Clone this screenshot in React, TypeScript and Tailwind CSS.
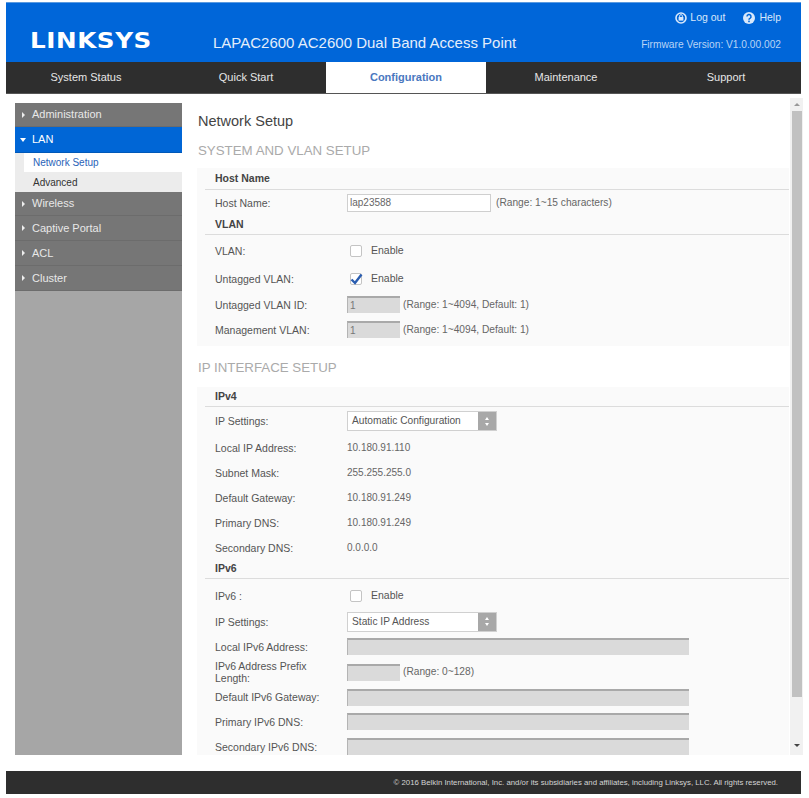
const font = "font-['Liberation_Sans',Arial,sans-serif]";

/* ----------------------------- Sidebar ----------------------------- */
function MenuItem({ label, h, open = false }: { label: string; h: string; open?: boolean }) {
    return (
        <div
            className={`flex items-center border-b ${h} ${
                open ? "bg-[#0066d6] border-[#0058b8] text-white" : "bg-[#767676] border-[#6c6c6c] text-[#e8e8e8]"
            }`}
        >
            <span className="w-[6px] ml-[5px] mr-[5px] flex justify-center">
                {open ? (
                    <span className="border-x-[3px] border-x-transparent border-t-[4px] border-t-white" />
                ) : (
                    <span className="border-y-[3px] border-y-transparent border-l-[3px] border-l-[#eeeeee]" />
                )}
            </span>
            <span className="text-[11px] ml-[1px]">{label}</span>
        </div>
    );
}

function Sidebar() {
    return (
        <aside className="w-[167px] h-[652px] ml-[15px] mt-[9px] bg-[#a6a6a6] shrink-0">
            <MenuItem label="Administration" h="h-[24px]" />
            <MenuItem label="LAN" h="h-[26px]" open />
            <div className="h-[19px] bg-[#ececec] pl-[9px]">
                <div className="h-full bg-white pl-[9px] flex items-center text-[10px] text-[#2a62b8]">Network Setup</div>
            </div>
            <div className="h-[20px] bg-[#ececec] pl-[18px] flex items-center text-[10px] text-[#333333]">Advanced</div>
            <MenuItem label="Wireless" h="h-[24px]" />
            <MenuItem label="Captive Portal" h="h-[25px]" />
            <MenuItem label="ACL" h="h-[25px]" />
            <MenuItem label="Cluster" h="h-[25px]" />
        </aside>
    );
}

/* ----------------------------- Form bits ---------------------------- */
function SubHead({ title, h }: { title: string; h: string }) {
    return (
        <div className={`flex items-center ${h} border-b border-[#dcdcdc] ml-[8px] pl-[10px] text-[10.5px] font-bold text-[#444444]`}>
            {title}
        </div>
    );
}

function Row({ label, h, children }: { label: string; h: string; children?: React.ReactNode }) {
    return (
        <div className={`flex items-center ${h}`}>
            <div className="w-[150px] pl-[18px] pr-[8px] shrink-0 text-[10.5px] leading-[12px] text-[#555555]">{label}</div>
            {children}
        </div>
    );
}

function Hint({ text }: { text: string }) {
    return <span className="ml-[3px] text-[10.2px] text-[#666666]">{text}</span>;
}

function GreyInput({ wide = false, value }: { wide?: boolean; value?: string }) {
    return (
        <div
            className={`${wide ? "w-[342px]" : "w-[53px]"} h-[17px] shrink-0 bg-[#dadada] border-t-2 border-l border-t-[#a9a9a9] border-l-[#b4b4b4] pl-[2px] text-[10px] leading-[15px] text-[#777777]`}
        >
            {value}
        </div>
    );
}

function Check({ checked = false }: { checked?: boolean }) {
    return (
        <div className="flex items-center ml-[3px]">
            <span className="w-[12px] h-[12px] rounded-[2px] border border-[#c4c4c4] bg-white flex items-center justify-center">
                {checked && (
                    <svg width="13" height="12" viewBox="0 0 13 12" className="shrink-0">
                        <path d="M1.5 6.5 L5 10 L11.5 1.5" fill="none" stroke="#2a5db0" strokeWidth="2.4" />
                    </svg>
                )}
            </span>
            <span className="ml-[9px] text-[10.5px] text-[#555555]">Enable</span>
        </div>
    );
}

function SelectBox({ value }: { value: string }) {
    return (
        <div className="w-[150px] h-[20px] bg-white border border-[#d0d0d0] flex items-center justify-between">
            <span className="pl-[4px] text-[10.2px] text-[#555555]">{value}</span>
            <span className="w-[18px] h-full bg-[#a8a8a8] flex flex-col items-center justify-center gap-[3px]">
                <span className="border-x-[2.5px] border-x-transparent border-b-[3px] border-b-white" />
                <span className="border-x-[2.5px] border-x-transparent border-t-[3px] border-t-white" />
            </span>
        </div>
    );
}

function Value({ text }: { text: string }) {
    return <span className="text-[10px] text-[#666666]">{text}</span>;
}

/* ----------------------------- Content ----------------------------- */
function Content() {
    return (
        <div className="w-[621px] shrink-0 h-[661px] flex pl-[15px]">
            <div className="w-[592px] h-[661px] shrink-0 overflow-hidden">
                <h1 className="h-[41px] pt-[17px] ml-[1px] text-[14.5px] leading-[20px] text-[#444444]">Network Setup</h1>
                <h2 className="h-[33px] pt-[7px] ml-[1px] text-[13.3px] leading-[18px] text-[#aaaaaa]">SYSTEM AND VLAN SETUP</h2>

                <section className="bg-[#fafafa] h-[178px]">
                    <SubHead title="Host Name" h="h-[22px]" />
                    <Row label="Host Name:" h="h-[26px]">
                        <div className="w-[144px] h-[18px] bg-white border border-[#cfcfcf] pl-[2px] text-[10px] leading-[16px] text-[#666666]">
                            lap23588
                        </div>
                        <span className="ml-[5px] text-[10.2px] text-[#666666]">(Range: 1~15 characters)</span>
                    </Row>
                    <SubHead title="VLAN" h="h-[19px]" />
                    <Row label="VLAN:" h="h-[31px]"><Check /></Row>
                    <Row label="Untagged VLAN:" h="h-[26px]"><Check checked /></Row>
                    <Row label="Untagged VLAN ID:" h="h-[25px]"><GreyInput value="1" /><Hint text="(Range: 1~4094, Default: 1)" /></Row>
                    <Row label="Management VLAN:" h="h-[25px]"><GreyInput value="1" /><Hint text="(Range: 1~4094, Default: 1)" /></Row>
                </section>

                <h2 className="h-[41px] pt-[13px] ml-[1px] text-[13.3px] leading-[18px] text-[#aaaaaa]">IP INTERFACE SETUP</h2>

                <section className="bg-[#fafafa] h-[376px]">
                    <SubHead title="IPv4" h="h-[20px]" />
                    <Row label="IP Settings:" h="h-[28px]"><SelectBox value="Automatic Configuration" /></Row>
                    <Row label="Local IP Address:" h="h-[25px]"><Value text="10.180.91.110" /></Row>
                    <Row label="Subnet Mask:" h="h-[25px]"><Value text="255.255.255.0" /></Row>
                    <Row label="Default Gateway:" h="h-[25px]"><Value text="10.180.91.249" /></Row>
                    <Row label="Primary DNS:" h="h-[25px]"><Value text="10.180.91.249" /></Row>
                    <Row label="Secondary DNS:" h="h-[25px]"><Value text="0.0.0.0" /></Row>
                    <SubHead title="IPv6" h="h-[19px]" />
                    <Row label="IPv6 :" h="h-[30px] pt-[3px]"><Check /></Row>
                    <Row label="IP Settings:" h="h-[25px]"><SelectBox value="Static IP Address" /></Row>
                    <Row label="Local IPv6 Address:" h="h-[25px]"><GreyInput wide /></Row>
                    <Row label="IPv6 Address Prefix Length:" h="h-[26px]"><GreyInput /><Hint text="(Range: 0~128)" /></Row>
                    <Row label="Default IPv6 Gateway:" h="h-[24px]"><GreyInput wide /></Row>
                    <Row label="Primary IPv6 DNS:" h="h-[25px]"><GreyInput wide /></Row>
                    <Row label="Secondary IPv6 DNS:" h="h-[25px]"><GreyInput wide /></Row>
                </section>
            </div>

            {/* scrollbar */}
            <div className="w-[13px] h-[657px] mt-[4px] ml-[1px] bg-[#f1f1f1] flex flex-col items-center">
                <span className="mt-[5px] border-x-[3px] border-x-transparent border-b-[3px] border-b-[#999999]" />
                <span className="mt-[5px] w-[10px] h-[586px] bg-[#c1c1c1]" />
                <span className="mt-[47px] border-x-[3px] border-x-transparent border-t-[3px] border-t-[#444444]" />
            </div>
        </div>
    );
}

/* ------------------------------- Page ------------------------------- */
export default function App() {
    const tabs = ["System Status", "Quick Start", "Configuration", "Maintenance", "Support"];

    return (
        <div className={`${font} w-[809px] h-[798px] bg-white overflow-hidden pt-[2px] px-[6px] pr-[8px]`}>
            <header className="h-[60px] bg-[#0066d9] border-t border-[#5a9ae0] flex text-white">
                <div className="w-[207px] pl-[24px] pt-[27px]">
                    <span className="block text-[22px] leading-[22px] font-bold tracking-[0.5px] origin-left scale-x-[1.12] font-['DejaVu_Sans',sans-serif]">
                        LINKSYS
                    </span>
                </div>
                <div className="pt-[30px] text-[15px] leading-[20px] text-[#e4eefb]">LAPAC2600 AC2600 Dual Band Access Point</div>
                <div className="ml-auto pr-[20px] pt-[7px] flex flex-col items-end">
                    <div className="flex items-center h-[16px] text-[10.5px] text-[#d8e8fb]">
                        <svg width="12" height="12" viewBox="0 0 12 12" className="mr-[3px]">
                            <circle cx="6" cy="6" r="5" fill="none" stroke="#d8e8fb" strokeWidth="1.6" />
                            <rect x="3.6" y="5" width="4.8" height="3.6" fill="#d8e8fb" />
                            <path d="M4.6 5 V4 a1.4 1.4 0 0 1 2.8 0 V5" fill="none" stroke="#d8e8fb" strokeWidth="0.9" />
                        </svg>
                        <span>Log out</span>
                        <svg width="12" height="12" viewBox="0 0 12 12" className="ml-[18px] mr-[4px]">
                            <circle cx="6" cy="6" r="6" fill="#d8e8fb" />
                            <path d="M4 4.6 a2 2 0 1 1 3 1.7 q-1 .5 -1 1.4" fill="none" stroke="#0066d9" strokeWidth="1.5" />
                            <rect x="5.2" y="8.6" width="1.6" height="1.6" fill="#0066d9" />
                        </svg>
                        <span>Help</span>
                    </div>
                    <div className="mt-[12px] text-[10.2px] leading-[14px] text-[#b9d4f5]">Firmware Version: V1.0.00.002</div>
                </div>
            </header>

            <nav className="h-[32px] bg-[#2e2e2e] grid grid-cols-[repeat(5,160px)] overflow-hidden border-b border-[#555555]">
                {tabs.map((t) => (
                    <div
                        key={t}
                        className={`flex items-center justify-center text-[11px] ${
                            t === "Configuration" ? "bg-white text-[#4a78c0] font-bold" : "text-[#e6e6e6]"
                        }`}
                    >
                        {t}
                    </div>
                ))}
            </nav>

            <div className="flex h-[661px] -ml-[6px]">
                <Sidebar />
                <Content />
            </div>

            <footer className="mt-[16px] h-[23px] bg-[#2e2e2e] flex items-center justify-end pr-[23px] text-[7.8px] text-[#d4d4d4]">
                © 2016 Belkin International, Inc. and/or its subsidiaries and affiliates, including Linksys, LLC. All rights reserved.
            </footer>
        </div>
    );
}
